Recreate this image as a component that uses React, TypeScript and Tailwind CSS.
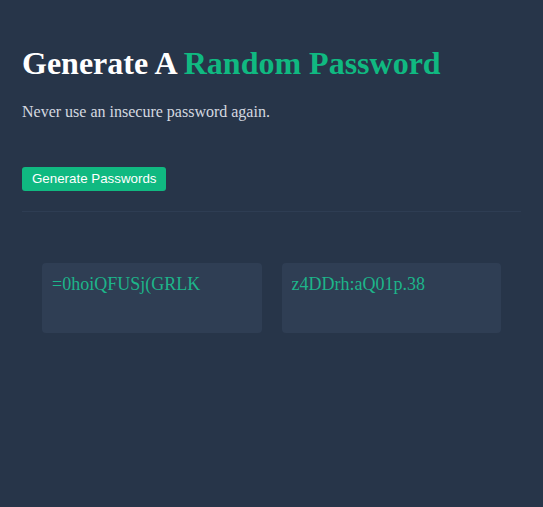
export default function App() {
  const passwords = ["=0hoiQFUSj(GRLK", "z4DDrh:aQ01p.38"];
  return (
    <div className="min-h-[507px] w-full bg-[#273549] px-[22px] pt-[44px] font-['Liberation_Serif',serif]">
      <h1 className="text-[32px] font-bold leading-[38px] text-white">
        Generate A <span className="text-[#10b981]">Random Password</span>
      </h1>
      <p className="mt-[20px] text-[16px] leading-[20px] text-[#d5d9e0]">
        Never use an insecure password again.
      </p>
      <button className="mt-[45px] rounded-[3px] bg-[#10b981] px-[10px] py-[4px] font-['Liberation_Sans',sans-serif] text-[13.33px] leading-[16px] text-white">
        Generate Passwords
      </button>
      <div className="mt-[20px] h-px w-full bg-[#2e3d53]" />
      <div className="flex gap-[20px] px-[20px] pt-[51px]">
        {passwords.map((p) => (
          <div key={p} className="h-[70px] w-[220px] rounded-[4px] bg-[#2f3e54] px-[10px] py-[10px] text-[18px] leading-[22px] text-[#1db58a]">
            {p}
          </div>
        ))}
      </div>
    </div>
  );
}
